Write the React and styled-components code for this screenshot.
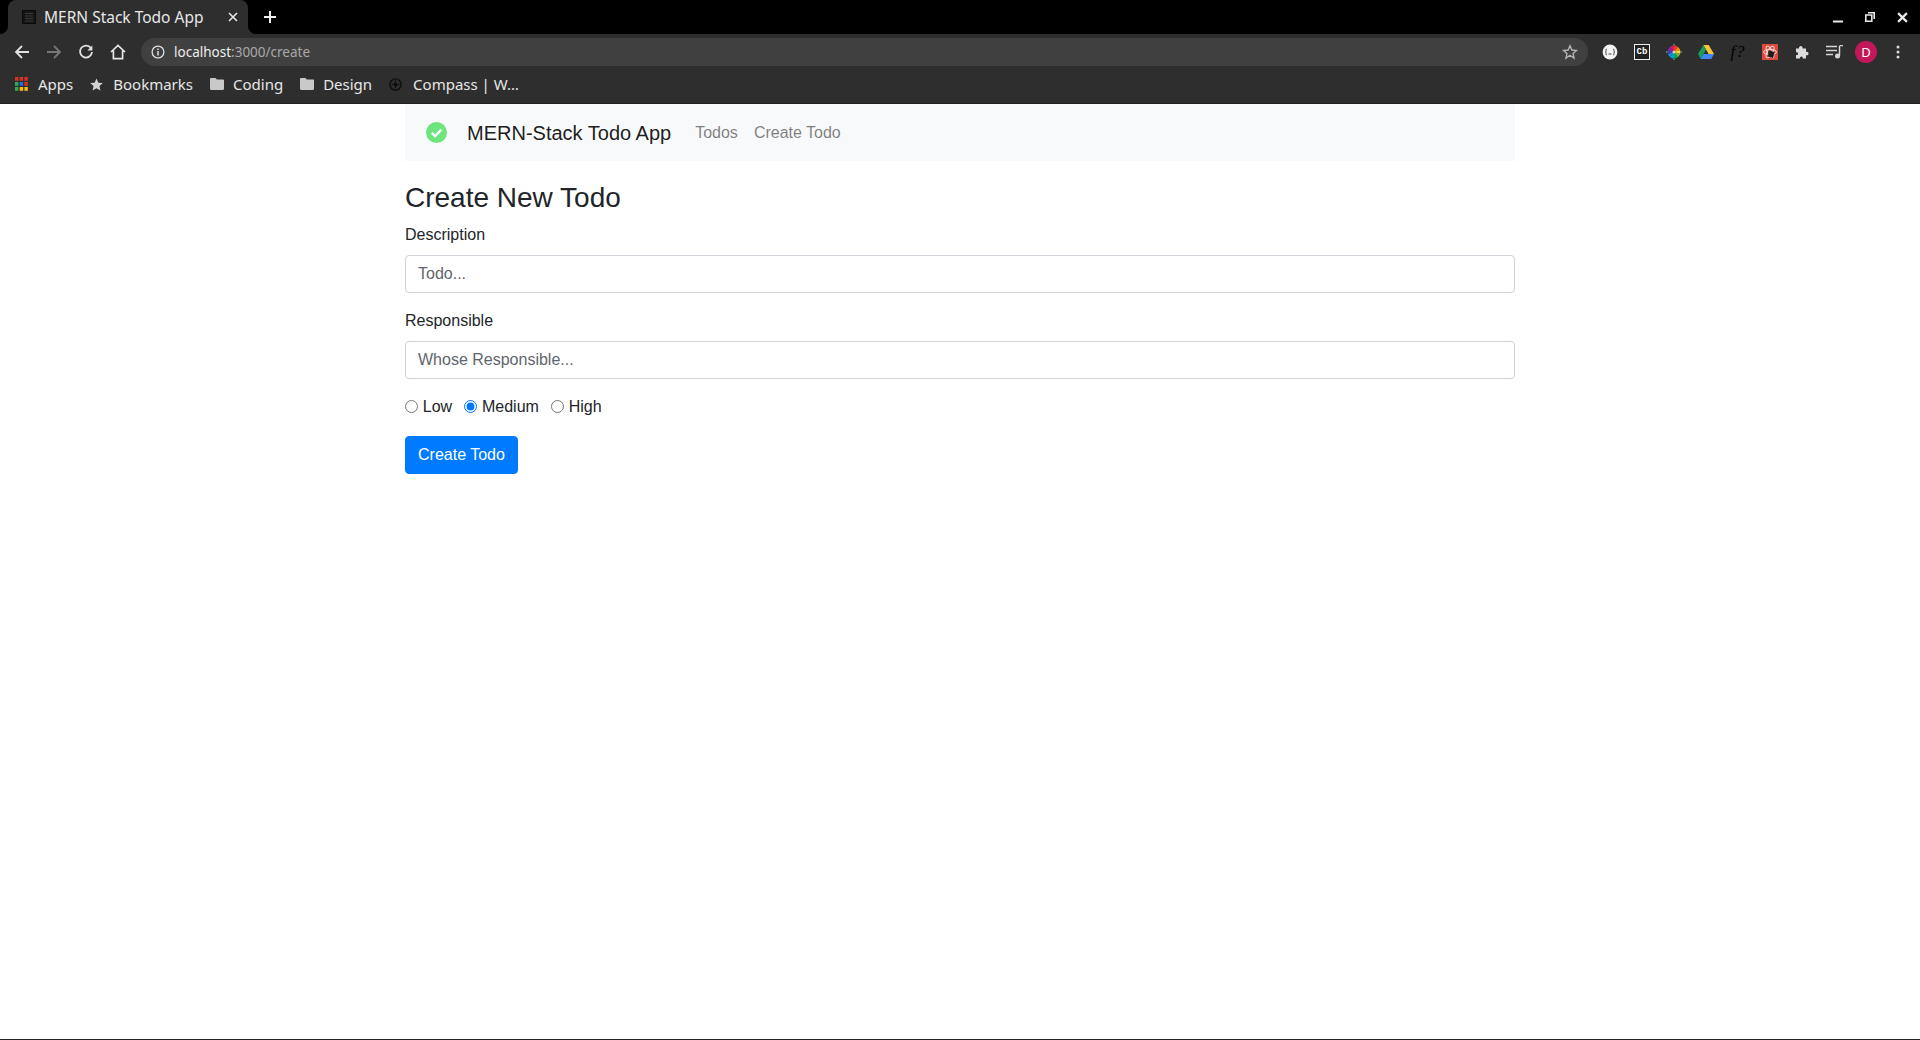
import React from "react";
import styled, { createGlobalStyle } from "styled-components";

const Global = createGlobalStyle`
  html, body { margin: 0; padding: 0; background: #fff; }
  * { box-sizing: border-box; }
`;

const CHROME_FONT = `"Noto Sans", "Open Sans", sans-serif`;
const PAGE_FONT = `"Liberation Sans", Arial, sans-serif`;

const Shell = styled.div`
  width: 1920px;
  height: 1040px;
  display: flex;
  flex-direction: column;
  overflow: hidden;
  border-bottom: 1px solid #222;
`;

const TabStrip = styled.div`
  height: 34px;
  flex: none;
  background: #000;
  display: flex;
  align-items: flex-end;
  padding-left: 8px;
`;

const Tab = styled.div`
  position: relative;
  width: 240px;
  height: 34px;
  background: #2e2e2e;
  border-radius: 8px 8px 0 0;
  display: flex;
  align-items: center;
  padding: 0 10px 0 14px;
  color: #e8e8e8;
  font: 400 15.5px ${CHROME_FONT};
  &::before, &::after {
    content: "";
    position: absolute;
    bottom: 0;
    width: 8px;
    height: 8px;
    background: radial-gradient(circle at var(--cx) 0, #000 7.5px, #2e2e2e 8.5px);
  }
  &::before { left: -8px; --cx: 0; }
  &::after { right: -8px; --cx: 8px; }
`;

const TabTitle = styled.span`
  margin-left: 8px;
  flex: 1;
  white-space: nowrap;
`;

const NewTab = styled.div`
  width: 16px;
  height: 34px;
  margin-left: 16px;
  display: flex;
  align-items: center;
`;

const WindowControls = styled.div`
  margin-left: auto;
  height: 34px;
  display: flex;
  align-items: center;
  gap: 22px;
  padding-right: 12px;
`;

const Toolbar = styled.div`
  height: 34px;
  flex: none;
  background: #2e2e2e;
  display: flex;
  align-items: center;
  padding: 2px 6px 0;
  justify-content: space-between;
`;

const IconSlot = styled.div`
  width: 32px;
  height: 32px;
  flex: none;
  display: flex;
  align-items: center;
  justify-content: center;
`;

const Omnibox = styled.div`
  width: 1447px;
  height: 28px;
  flex: none;
  margin: 0 6px 0 7px;
  border-radius: 14px;
  background: #404040;
  display: flex;
  align-items: center;
  padding: 0 10px 0 10px;
  font: 400 13.5px ${CHROME_FONT};
  color: #a9a9a9;
`;

const Url = styled.div`
  margin-left: 9px;
  flex: 1;
  white-space: nowrap;
  b { font-weight: 400; color: #eee; }
`;

const NavGroup = styled.div`
  display: flex;
  align-items: center;
`;

const Bookmarks = styled.div`
  height: 35px;
  flex: none;
  background: #2e2e2e;
  display: flex;
  align-items: center;
  padding: 0 0 3px 15px;
  gap: 17px;
`;

const Bookmark = styled.div`
  display: flex;
  align-items: center;
  gap: ${(p) => p.$gap || 10}px;
  color: #e6e6e6;
  font: 400 15px ${CHROME_FONT};
  white-space: nowrap;
  svg { flex: none; }
`;

const Divider = styled.div`
  height: 1px;
  flex: none;
  background: #222;
`;

const Page = styled.main`
  flex: 1;
  background: #fff;
  font-family: ${PAGE_FONT};
  color: #212529;
`;

const Container = styled.div`
  width: 1110px;
  margin: 0 auto;
`;

const Navbar = styled.nav`
  height: 57.4px;
  background: #f8f9fa;
  padding: 8px 16px;
  display: flex;
  align-items: center;
`;

const LogoLink = styled.a`
  width: 30px;
  height: 30px;
  margin-right: 16px;
  display: flex;
  align-items: center;
  justify-content: center;
`;

const Brand = styled.a`
  font-size: 20px;
  line-height: 30px;
  color: rgba(0, 0, 0, 0.9);
  margin-right: 16px;
  white-space: nowrap;
`;

const NavLink = styled.a`
  font-size: 16px;
  line-height: 24px;
  padding: 0 8px;
  color: rgba(0, 0, 0, 0.5);
`;

const Heading = styled.h3`
  font-size: 28px;
  font-weight: 500;
  line-height: 33.6px;
  margin: 20px 0 8px;
`;

const FormGroup = styled.div`
  margin-bottom: 16px;
`;

const Label = styled.label`
  display: block;
  font-size: 16px;
  line-height: 24px;
  margin-bottom: 8px;
`;

const Input = styled.input`
  display: block;
  width: 100%;
  height: 38px;
  padding: 6px 12px;
  font: 400 16px/24px ${PAGE_FONT};
  color: #495057;
  background: #fff;
  border: 1px solid #ced4da;
  border-radius: 4px;
  outline: none;
  &::placeholder { color: #5f666d; opacity: 1; }
`;

const RadioRow = styled.div`
  display: flex;
  align-items: flex-start;
  height: 24.6px;
  margin-bottom: 16px;
`;

const RadioItem = styled.label`
  display: flex;
  align-items: center;
  height: 24px;
  margin-right: 12px;
  font-size: 16px;
  line-height: 24px;
`;

const Radio = styled.input`
  margin: 0 4.8px 0 0;
  width: 13px;
  height: 13px;
`;

const Button = styled.button`
  display: block;
  height: 38px;
  padding: 6px 12px;
  font: 400 16px/24px ${PAGE_FONT};
  color: #fff;
  background: #007bff;
  border: 1px solid #007bff;
  border-radius: 4px;
`;

const CbBadge = styled.div`
  width: 16px;
  height: 16px;
  border: 1px solid #eee;
  background: #222;
  color: #fff;
  font: 700 9px/14px "Liberation Mono", monospace;
  text-align: center;
`;

const FQ = styled.div`
  color: #000;
  font: italic 400 17px/20px "Liberation Serif", serif;
  letter-spacing: 1px;
`;

const Avatar = styled.div`
  width: 22px;
  height: 22px;
  border-radius: 50%;
  background: #c2185b;
  color: #fff;
  font: 400 13px/22px ${CHROME_FONT};
  text-align: center;
`;

const stroke = (c = "#e0e0e0", w = 2) => ({
  fill: "none",
  stroke: c,
  strokeWidth: w,
  strokeLinecap: "butt",
  strokeLinejoin: "miter",
});

const Favicon = () => (
  <svg width="14" height="14" viewBox="0 0 14 14">
    <rect x="0.5" y="0.5" width="13" height="13" fill="#161616" stroke="#0a0a0a" />
    <path d="M3 3.5h8M3 6h8M3 8.5h8M3 11h8" stroke="#3a3a3a" strokeWidth="1.2" />
  </svg>
);

const CloseX = ({ size = 10, w = 1.6, color = "#e8e8e8" }) => (
  <svg width={size} height={size} viewBox="0 0 10 10">
    <path d="M1 1l8 8M9 1l-8 8" {...stroke(color, w)} />
  </svg>
);

const Arrow = ({ color, flip }) => (
  <svg width="16" height="16" viewBox="0 0 16 16" style={flip ? { transform: "scaleX(-1)" } : undefined}>
    <path d="M15 8H2M8 2L2 8l6 6" {...stroke(color, 1.8)} />
  </svg>
);

const Reload = () => (
  <svg width="16" height="16" viewBox="0 0 16 16">
    <path d="M13 4.2A6 6 0 1 0 14 8" {...stroke("#e0e0e0", 1.8)} />
    <path d="M14.4 1.4v5h-5z" fill="#e0e0e0" />
  </svg>
);

const Home = () => (
  <svg width="16" height="16" viewBox="0 0 16 16">
    <path d="M1 8l7-6.6L15 8M3.4 6.4V14.6h9.2V6.4" {...stroke("#e6e6e6", 1.7)} />
  </svg>
);

const Info = () => (
  <svg width="14" height="14" viewBox="0 0 14 14">
    <circle cx="7" cy="7" r="5.9" {...stroke("#e0e0e0", 1.3)} />
    <path d="M7 6v4.4M7 3.4v1.5" {...stroke("#e0e0e0", 1.5)} />
  </svg>
);

const StarOutline = () => (
  <svg width="16" height="16" viewBox="0 0 16 16">
    <path d="M8 1.8l1.9 4.2 4.6.5-3.4 3.1.9 4.5L8 11.3l-4 2.8.9-4.5L1.5 6.5 6.1 6z" {...stroke("#b5b5b5", 1.4)} />
  </svg>
);

const AppsGrid = () => {
  const colors = ["#d93025", "#d93025", "#d93025", "#34a853", "#1a73e8", "#d93025", "#34a853", "#fbbc04", "#fbbc04"];
  return (
    <svg width="13" height="14" viewBox="0 0 13 14">
      {colors.map((c, i) => (
        <rect key={i} x={(i % 3) * 4.7} y={Math.floor(i / 3) * 5} width="3.4" height="3.8" fill={c} />
      ))}
    </svg>
  );
};

const StarFilled = () => (
  <svg width="13" height="13" viewBox="0 0 14 14">
    <path d="M7 .6l2 4.4 4.8.5-3.6 3.2 1 4.7L7 11l-4.2 2.4 1-4.7L.2 5.5 5 5z" fill="#d2d2d2" />
  </svg>
);

const Folder = () => (
  <svg width="14" height="12" viewBox="0 0 14 12">
    <path d="M1.2 0h4.2l1.5 1.6h5.9c.7 0 1.2.5 1.2 1.2v8c0 .7-.5 1.2-1.2 1.2H1.2C.5 12 0 11.5 0 10.8V1.2C0 .5.5 0 1.2 0z" fill="#c9c9c9" />
  </svg>
);

const CompassIcon = () => (
  <svg width="13" height="13" viewBox="0 0 13 13">
    <circle cx="6.5" cy="6.5" r="5.6" {...stroke("#0d0d0d", 1.4)} />
    <circle cx="6.5" cy="6.5" r="2" fill="#0d0d0d" />
    <path d="M6.5 2.5v8M2.5 6.5h8" {...stroke("#0d0d0d", 0.8)} />
  </svg>
);

const BracesExt = () => (
  <svg width="16" height="16" viewBox="0 0 16 16">
    <circle cx="8" cy="8" r="7.4" fill="#f4f4f4" />
    <path d="M5 5c-1 0-1 .8-1 1.5S4 8 3.3 8C4 8 4 8.800 4 9.500S4 11 5 11M11 5c1 0 1 .8 1 1.500S12 8 12.700 8C12 8 12 8.800 12 9.500S12 11 11 11M6.500 10h3" {...stroke("#333", 0.9)} />
  </svg>
);

const wheelColors = ["#e53935", "#fb8c00", "#fdd835", "#7cb342", "#00a651", "#00acc1", "#1e88e5", "#3949ab", "#8e24aa", "#d81b60"];

const ColorWheel = () => (
  <svg width="16" height="16" viewBox="-8 -8 16 16">
    {wheelColors.map((c, i) => {
      const a0 = (i / 10) * 2 * Math.PI - Math.PI / 2;
      const a1 = ((i + 1) / 10) * 2 * Math.PI - Math.PI / 2;
      return (
        <path
          key={c}
          d={`M0 0L${6.4 * Math.cos(a0)} ${6.4 * Math.sin(a0)}A6.4 6.4 0 0 1 ${6.4 * Math.cos(a1)} ${6.4 * Math.sin(a1)}Z`}
          fill={c}
        />
      );
    })}
    <circle r="1.6" fill="#fff" opacity="0.7" />
    <path d="M0-8v1.600M0 8V6.400M-8 0h1.600M8 0H6.400" stroke="#888" strokeWidth="1.400" />
  </svg>
);

const Drive = () => (
  <svg width="16" height="14" viewBox="0 0 16 14">
    <path d="M5.300 0h5.400l5.300 9h-5.300z" fill="#f8c537" />
    <path d="M5.300 0L0 9l2.700 5 5.300-9.300z" fill="#1a9c5b" />
    <path d="M2.700 14L5.500 9H16l-2.700 5z" fill="#4285f4" />
  </svg>
);

const AtomExt = () => (
  <svg width="16" height="16" viewBox="0 0 16 16">
    <rect width="16" height="16" fill="#d9493d" />
    <g {...stroke("#f6e6e2", 0.9)}>
      <ellipse cx="8" cy="8" rx="6.500" ry="2.600" />
      <ellipse cx="8" cy="8" rx="6.500" ry="2.600" transform="rotate(60 8 8)" />
      <ellipse cx="8" cy="8" rx="6.500" ry="2.600" transform="rotate(120 8 8)" />
    </g>
    <path d="M6.500 6.500l6 1.500-1.500 6-5-1.500z" fill="#1c1c1c" />
  </svg>
);

const Puzzle = () => (
  <svg width="15" height="15" viewBox="0 0 15 15">
    <path d="M1 3.500h3c-.6-3.400 4.200-3.400 3.600 0h3.400v3.200c3.400-.6 3.400 4.200 0 3.600V13.500H7.800c.5-2.800-3.300-2.800-2.800 0H1v-3.400c2.800.5 2.800-3.300 0-2.800z" fill="#dcdcdc" />
  </svg>
);

const Playlist = () => (
  <svg width="17" height="14" viewBox="0 0 17 14">
    <path d="M0 1.500h11M0 5.500h11M0 9.500h7" stroke="#d6d6d6" strokeWidth="1.500" />
    <path d="M13.500 1v9.500" stroke="#d6d6d6" strokeWidth="1.500" />
    <path d="M13.500.5H17" stroke="#d6d6d6" strokeWidth="1.500" />
    <circle cx="11.500" cy="11" r="2.500" fill="#d6d6d6" />
  </svg>
);

const Dots = () => (
  <svg width="4" height="14" viewBox="0 0 4 14">
    <circle cx="2" cy="2" r="1.500" fill="#dcdcdc" />
    <circle cx="2" cy="7" r="1.500" fill="#dcdcdc" />
    <circle cx="2" cy="12" r="1.500" fill="#dcdcdc" />
  </svg>
);

const Minimize = () => (
  <svg width="10" height="12" viewBox="0 0 10 12">
    <path d="M0 10.500h10" stroke="#e8e8e8" strokeWidth="2" />
  </svg>
);

const Restore = () => (
  <svg width="10" height="10" viewBox="0 0 10 10">
    <path d="M3 .8h6.200V7M.8 3h6v6.200H.8z" {...stroke("#e8e8e8", 1.600)} />
  </svg>
);

const CheckLogo = () => (
  <svg width="21" height="21" viewBox="0 0 21 21">
    <circle cx="10.500" cy="10.500" r="10.500" fill="#6fe47c" />
    <path d="M5.800 10.800l3.300 3.200 6.200-6.400" fill="none" stroke="#fff" strokeWidth="2.400" />
  </svg>
);

export default function App() {
  return (
    <Shell>
      <Global />
      <TabStrip>
        <Tab>
          <Favicon />
          <TabTitle>MERN Stack Todo App</TabTitle>
          <CloseX />
        </Tab>
        <NewTab>
          <svg width="12" height="12" viewBox="0 0 12 12">
            <path d="M6 0v12M0 6h12" stroke="#f0f0f0" strokeWidth="2" />
          </svg>
        </NewTab>
        <WindowControls>
          <Minimize />
          <Restore />
          <CloseX size={11} w={2} />
        </WindowControls>
      </TabStrip>
      <Toolbar>
        <NavGroup>
          <IconSlot><Arrow color="#e0e0e0" /></IconSlot>
          <IconSlot><Arrow color="#777" flip /></IconSlot>
          <IconSlot><Reload /></IconSlot>
          <IconSlot><Home /></IconSlot>
        </NavGroup>
        <Omnibox>
          <Info />
          <Url><b>localhost</b>:3000/create</Url>
          <StarOutline />
        </Omnibox>
        <NavGroup>
          <IconSlot><BracesExt /></IconSlot>
          <IconSlot><CbBadge>Cb</CbBadge></IconSlot>
          <IconSlot><ColorWheel /></IconSlot>
          <IconSlot><Drive /></IconSlot>
          <IconSlot><FQ>f?</FQ></IconSlot>
          <IconSlot><AtomExt /></IconSlot>
          <IconSlot><Puzzle /></IconSlot>
          <IconSlot><Playlist /></IconSlot>
          <IconSlot><Avatar>D</Avatar></IconSlot>
          <IconSlot><Dots /></IconSlot>
        </NavGroup>
      </Toolbar>
      <Bookmarks>
        <Bookmark><AppsGrid />Apps</Bookmark>
        <Bookmark><StarFilled />Bookmarks</Bookmark>
        <Bookmark $gap={9}><Folder />Coding</Bookmark>
        <Bookmark $gap={9}><Folder />Design</Bookmark>
        <Bookmark $gap={11}><CompassIcon />Compass | W…</Bookmark>
      </Bookmarks>
      <Divider />
      <Page>
        <Container>
          <Navbar>
            <LogoLink><CheckLogo /></LogoLink>
            <Brand>MERN-Stack Todo App</Brand>
            <NavLink>Todos</NavLink>
            <NavLink>Create Todo</NavLink>
          </Navbar>
          <Heading>Create New Todo</Heading>
          <FormGroup>
            <Label>Description</Label>
            <Input placeholder="Todo..." readOnly />
          </FormGroup>
          <FormGroup>
            <Label>Responsible</Label>
            <Input placeholder="Whose Responsible..." readOnly />
          </FormGroup>
          <RadioRow>
            <RadioItem><Radio type="radio" name="p" />Low</RadioItem>
            <RadioItem><Radio type="radio" name="p" defaultChecked />Medium</RadioItem>
            <RadioItem><Radio type="radio" name="p" />High</RadioItem>
          </RadioRow>
          <Button>Create Todo</Button>
        </Container>
      </Page>
    </Shell>
  );
}
